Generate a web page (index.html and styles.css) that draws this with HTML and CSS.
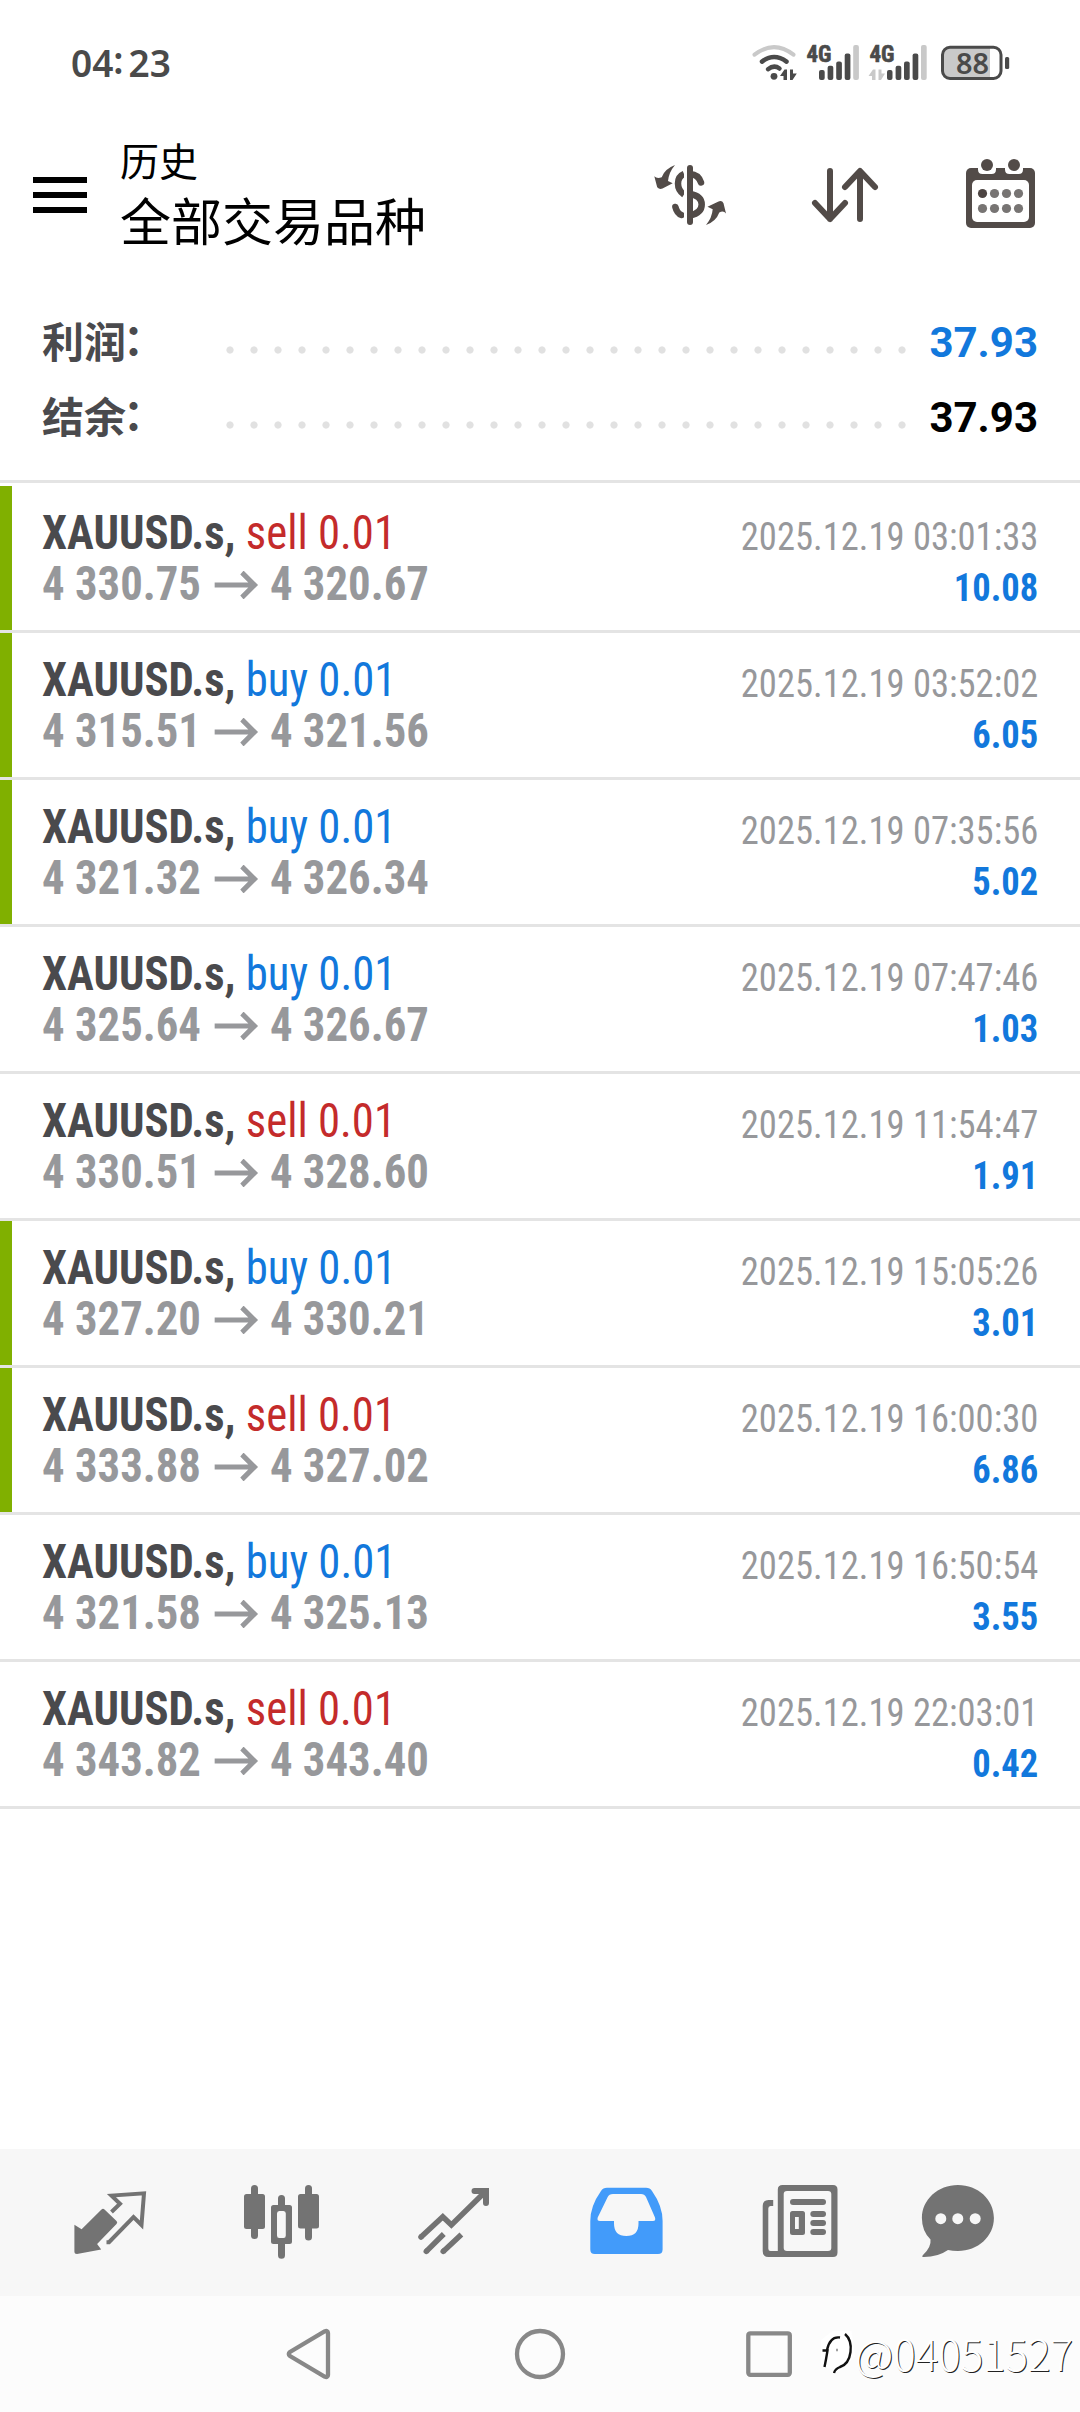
FILE: index.html
```html
<!DOCTYPE html>
<html lang="zh-CN">
<head>
<meta charset="utf-8">
<title>历史</title>
<link rel="stylesheet" href="styles.css">
</head>
<body>
<div class="screen">
  <div class="status">
    <span class="clock">04<span class="colon">:</span>23</span>
    <svg class="status-icons" width="264" height="46" viewBox="0 0 264 46">
      <g fill="none" stroke-linecap="round">
        <path d="M4.5 14.7Q24 -.5 43.5 14.7" stroke="#c9c9c9" stroke-width="4"/>
        <path d="M12 21.6Q24 12.500 36.500 21.600" stroke="#4a4a4a" stroke-width="4.500"/>
        <path d="M18 29.200Q24 24.500 29.500 28.500" stroke="#4a4a4a" stroke-width="4.500"/>
      </g>
      <g fill="#4a4a4a">
        <circle cx="24" cy="36.300" r="3.400"/>
        <path d="M30 36L34.500 29.500H37V40H33.500V36ZM40 29.500H43V33.500H46.800L42.500 40H40Z"/>
        <text class="net" x="56.500" y="22.300" textLength="25" lengthAdjust="spacingAndGlyphs">4G</text>
        <rect x="69" y="30" width="5.700" height="10" rx="2"/><rect x="77.600" y="25.700" width="5.700" height="14.300" rx="2"/><rect x="86.200" y="21.600" width="5.700" height="18.400" rx="2"/><rect x="94.700" y="13.600" width="5.700" height="26.400" rx="2"/>
        <text class="net" x="119.500" y="22.300" textLength="25" lengthAdjust="spacingAndGlyphs">4G</text>
        <rect x="137" y="30" width="5.500" height="10" rx="2"/><rect x="145.600" y="25.700" width="5.700" height="14.300" rx="2"/><rect x="154" y="21.600" width="5.700" height="18.400" rx="2"/><rect x="162.600" y="13.600" width="5.700" height="26.400" rx="2"/>
        <rect x="255" y="17" width="4.200" height="12" rx="1.500"/>
      </g>
      <g fill="#c9c9c9">
        <rect x="103.200" y="5" width="5.700" height="35" rx="2"/><rect x="171" y="5" width="5.700" height="35" rx="2"/>
        <path d="M118.500 36L123 29.500H125.500V40H122V36ZM128.500 29.500H131.500V33.500H135L131 40H128.500Z"/>
        <path d="M200 8H240V38H200Q193 38 193 31V15Q193 8 200 8Z"/>
      </g>
      <rect x="192.500" y="7.300" width="58.500" height="31.200" rx="7.500" fill="none" stroke="#4a4a4a" stroke-width="3"/>
      <text class="battery" x="206" y="33.700" textLength="33" lengthAdjust="spacingAndGlyphs">88</text>
    </svg>
  </div>

  <header class="header">
    <svg class="menu" width="54" height="36" viewBox="0 0 54 36"><path d="M0 0H54V6H0ZM0 15H54V21H0ZM0 30H54V36H0Z"/></svg>
    <div class="titles">
      <div class="title-small">历史</div>
      <div class="title-large">全部交易品种</div>
    </div>
    <div class="actions">
      <svg width="80" height="80" viewBox="0 0 80 80">
        <path fill="none" stroke="#524b48" stroke-width="6.500" d="M34 19Q28 21.500 28 28.500T34 39.500M40 39Q51.700 41 51.700 49.500T40 60.500"/>
        <path fill="none" stroke="#524b48" stroke-width="6.500" stroke-linecap="round" d="M40 19Q48.500 19.500 51 27.500M25.400 52Q27 58.500 31.500 60"/>
        <path fill="none" stroke="#fff" stroke-width="3" d="M35.500 10V70"/>
        <path fill="none" stroke="#524b48" stroke-width="6" stroke-linecap="round" d="M40 13V67"/>
        <path fill="#524b48" d="M25 10Q14.500 14 11.700 22.300Q7 24 4.300 21.300L7.200 32.300Q9.500 35 12.500 33.600L22.700 28.200L18 26Q19 17 25 10ZM56 70Q62 63 62.700 54.300L57.500 51.700L68 46.700Q72 45 73.500 48.200L76 58.500Q73.500 55 69.300 57.500Q66 66.500 56 70Z"/>
      </svg>
      <svg width="80" height="80" viewBox="0 0 80 80" fill="none" stroke="#524b48" stroke-width="6" stroke-linecap="round" stroke-linejoin="round">
        <path d="M25 16V64M10 48L25 64L40 48M55 64V16.500M40 32L55 16L70 32"/>
      </svg>
      <svg width="80" height="80" viewBox="0 0 80 80">
        <rect x="6" y="13" width="69" height="60" rx="5" fill="#524b48"/>
        <rect x="12" y="25" width="57" height="42" rx="5" fill="#fff"/>
        <path d="M18 12H36V14.500Q36 19 31.500 19H22.500Q18 19 18 14.500ZM45 12H63V14.500Q63 19 58.500 19H49.500Q45 19 45 14.500Z" fill="#fff"/>
        <g fill="#524b48"><circle cx="27" cy="10" r="6"/><circle cx="54" cy="10" r="6"/></g>
        <g fill="#777473"><circle cx="22.500" cy="38.500" r="4.600" fill="#4d4543"/><circle cx="34.500" cy="38.500" r="4.600"/><circle cx="46.500" cy="38.500" r="4.600"/><circle cx="58.500" cy="38.500" r="4.600"/><circle cx="22.500" cy="53.500" r="4.600"/><circle cx="34.500" cy="53.500" r="4.600"/><circle cx="46.500" cy="53.500" r="4.600"/><circle cx="58.500" cy="53.500" r="4.600"/></g>
      </svg>
    </div>
  </header>

  <section class="summary">
    <div class="sum-row"><span class="sum-label">利润<span class="label-colon">：</span></span><span class="leader"></span><span class="sum-value blue">37.93</span></div>
    <div class="sum-row"><span class="sum-label">结余<span class="label-colon">：</span></span><span class="leader"></span><span class="sum-value">37.93</span></div>
  </section>

  <main class="deals">
    <div class="deal mark"><div class="left"><div class="symbol">XAUUSD.s, <span class="sell">sell 0.01</span></div><div class="prices">4 330.75<svg class="arrow" viewBox="0 0 47 28"><path d="M0 14H43M29.500 1.500L43 14L29.500 26.500"/></svg>4 320.67</div></div><div class="right"><div class="date">2025.12.19 03:01:33</div><div class="profit">10.08</div></div></div>
    <div class="deal mark"><div class="left"><div class="symbol">XAUUSD.s, <span class="buy">buy 0.01</span></div><div class="prices">4 315.51<svg class="arrow" viewBox="0 0 47 28"><path d="M0 14H43M29.500 1.500L43 14L29.500 26.500"/></svg>4 321.56</div></div><div class="right"><div class="date">2025.12.19 03:52:02</div><div class="profit">6.05</div></div></div>
    <div class="deal mark"><div class="left"><div class="symbol">XAUUSD.s, <span class="buy">buy 0.01</span></div><div class="prices">4 321.32<svg class="arrow" viewBox="0 0 47 28"><path d="M0 14H43M29.500 1.500L43 14L29.500 26.500"/></svg>4 326.34</div></div><div class="right"><div class="date">2025.12.19 07:35:56</div><div class="profit">5.02</div></div></div>
    <div class="deal"><div class="left"><div class="symbol">XAUUSD.s, <span class="buy">buy 0.01</span></div><div class="prices">4 325.64<svg class="arrow" viewBox="0 0 47 28"><path d="M0 14H43M29.500 1.500L43 14L29.500 26.500"/></svg>4 326.67</div></div><div class="right"><div class="date">2025.12.19 07:47:46</div><div class="profit">1.03</div></div></div>
    <div class="deal"><div class="left"><div class="symbol">XAUUSD.s, <span class="sell">sell 0.01</span></div><div class="prices">4 330.51<svg class="arrow" viewBox="0 0 47 28"><path d="M0 14H43M29.500 1.500L43 14L29.500 26.500"/></svg>4 328.60</div></div><div class="right"><div class="date">2025.12.19 11:54:47</div><div class="profit">1.91</div></div></div>
    <div class="deal mark"><div class="left"><div class="symbol">XAUUSD.s, <span class="buy">buy 0.01</span></div><div class="prices">4 327.20<svg class="arrow" viewBox="0 0 47 28"><path d="M0 14H43M29.500 1.500L43 14L29.500 26.500"/></svg>4 330.21</div></div><div class="right"><div class="date">2025.12.19 15:05:26</div><div class="profit">3.01</div></div></div>
    <div class="deal mark"><div class="left"><div class="symbol">XAUUSD.s, <span class="sell">sell 0.01</span></div><div class="prices">4 333.88<svg class="arrow" viewBox="0 0 47 28"><path d="M0 14H43M29.500 1.500L43 14L29.500 26.500"/></svg>4 327.02</div></div><div class="right"><div class="date">2025.12.19 16:00:30</div><div class="profit">6.86</div></div></div>
    <div class="deal"><div class="left"><div class="symbol">XAUUSD.s, <span class="buy">buy 0.01</span></div><div class="prices">4 321.58<svg class="arrow" viewBox="0 0 47 28"><path d="M0 14H43M29.500 1.500L43 14L29.500 26.500"/></svg>4 325.13</div></div><div class="right"><div class="date">2025.12.19 16:50:54</div><div class="profit">3.55</div></div></div>
    <div class="deal"><div class="left"><div class="symbol">XAUUSD.s, <span class="sell">sell 0.01</span></div><div class="prices">4 343.82<svg class="arrow" viewBox="0 0 47 28"><path d="M0 14H43M29.500 1.500L43 14L29.500 26.500"/></svg>4 343.40</div></div><div class="right"><div class="date">2025.12.19 22:03:01</div><div class="profit">0.42</div></div></div>
  </main>

  <nav class="tabs">
    <svg width="84" height="84" viewBox="0 0 84 84">
      <path fill="#737373" d="M6.400 44.700L13.600 49.300L33.500 29.500Q35 28 36.500 29.500L48.500 41Q50 42.500 48.500 44L29.100 64L33.200 69.500L9 74Q6.400 74 6.400 71.500Z"/>
      <path fill="none" stroke="#737373" stroke-width="4" d="M43.500 32L52 23.800L43.500 15.600L76 13.300L73.500 45L65.500 37L41 62.200H38.500" />
    </svg>
    <svg width="84" height="84" viewBox="0 0 84 84" fill="#737373">
      <rect x="5" y="14" width="21" height="35" rx="2.500"/><rect x="12" y="5" width="7" height="54" rx="3.500"/>
      <path fill-rule="evenodd" d="M34.500 25H50.500Q53 25 53 27.500V61.500Q53 64 50.500 64H34.500Q32 64 32 61.500V27.500Q32 25 34.500 25ZM40.300 31Q38 31 38 33.500V55.500Q38 58 40.300 58H44.500Q46.800 58 46.800 55.500V33.500Q46.800 31 44.500 31Z"/>
      <path d="M39 26V18.500Q39 15 42.500 15T46 18.500V26ZM39 63V75.300Q39 78.800 42.500 78.800T46 75.300V63Z"/>
      <rect x="59" y="14" width="21" height="34.500" rx="2.500"/><rect x="66" y="5" width="7" height="55.500" rx="3.500"/>
    </svg>
    <svg width="84" height="84" viewBox="0 0 84 84" fill="none" stroke="#737373" stroke-width="5.500">
      <path stroke-linecap="round" d="M9 57L9.200 56.800"/><path d="M9 57L30.800 36.700L39.400 45L74 11"/>
      <path stroke-width="6" stroke-linecap="round" d="M62.500 11H74V23"/>
      <path stroke-linecap="round" d="M14.300 71.400L14.500 71.200M31.200 71.400L31.400 71.200"/><path d="M14.300 71.400L31.800 54M31.200 71.400L49.400 54.500"/>
    </svg>
    <svg width="84" height="84" viewBox="0 0 84 84">
      <path fill="#429bfa" fill-rule="evenodd" d="M23 7.700H62Q66 7.700 68 11Q78.600 26 78.600 41V69.500Q78.600 74 74 74H10.800Q6.300 74 6.300 69.500V41Q6.300 26 17 11Q19 7.700 23 7.700ZM29 14Q25 14 23.700 17L13.700 37.500Q12.700 41 16 41H30V43.500Q30 56 42.300 56T54.500 43.500V41H69Q72 41 71 37.500L62 17Q60.500 14 57 14Z"/>
    </svg>
    <svg width="84" height="84" viewBox="0 0 84 84" fill="#737373">
      <path fill-rule="evenodd" d="M24.500 5H75Q79.500 5 79.500 9.500V72.500Q79.500 77 75 77H10.500Q4.700 77 4.700 71V26Q4.700 20 10.500 20H15.200V26H12.500Q10.300 26 10.300 28.500V68.500Q10.300 71 12.500 71H19.800V9.500Q19.800 5 24.500 5ZM29 11Q25.700 11 25.700 14V68Q25.700 71 29 71H70Q73.300 71 73.300 68V14Q73.300 11 70 11Z"/>
      <rect x="32" y="19" width="36" height="6" rx="3"/>
      <path fill-rule="evenodd" d="M34.500 31H44.500Q47 31 47 33.500V52.500Q47 55 44.500 55H34.500Q32 55 32 52.500V33.500Q32 31 34.500 31ZM37 37V49H40.800V37Z"/>
      <rect x="52.300" y="31" width="15.700" height="6" rx="3"/><rect x="52.300" y="40" width="15.700" height="6" rx="3"/><rect x="52.300" y="49" width="15.700" height="6" rx="3"/>
    </svg>
    <svg width="84" height="84" viewBox="0 0 84 84">
      <path fill="#737373" d="M41.900 5C62 5 77.900 19.500 77.900 38C77.900 56.500 62 71 41.900 71Q36.500 71 32 70Q22 77 8 77Q5 77 7 75Q15.500 67 14.500 59.500Q5.900 51 5.900 38C5.900 19.500 22 5 41.900 5Z"/>
      <g fill="#f7f7f7"><circle cx="24.800" cy="38.700" r="5.500"/><circle cx="41.800" cy="38.700" r="5.500"/><circle cx="59.200" cy="38.700" r="5.500"/></g>
    </svg>
  </nav>

  <footer class="system-nav">
    <svg width="54" height="54" viewBox="0 0 54 54"><path d="M39.500 4.500Q43 3 43 6V48Q43 51 39.500 49.500L5 29Q2.500 27 5 25Z"/></svg>
    <svg width="54" height="54" viewBox="0 0 54 54"><circle cx="27" cy="27" r="23"/></svg>
    <svg width="54" height="54" viewBox="0 0 54 54"><rect x="7.300" y="6.300" width="41.500" height="41.500" rx="2"/></svg>
    <div class="watermark">
      <svg width="36" height="46" viewBox="0 0 36 46">
        <path stroke="#fff" stroke-width="8" d="M5 12L14 5H28L31 25L18 37L5 33Z" fill="#fff"/>
        <path class="ink" d="M2.500 20.500H7.500Q6 30 4.500 37M7 20Q10 6 20 7.500M25 4Q32 10 30.500 22T20 37Q15 39 14 43"/><path class="ink" stroke-opacity=".4" d="M16 20H18"/>
      </svg>
      <span>@04051527</span>
    </div>
  </footer>
</div>
</body>
</html>
```
FILE: styles.css
```css
* { box-sizing: border-box; }
body { margin: 0; background: #fff; }
svg { display: block; flex: none; }

.screen {
  width: 1080px;
  height: 2412px;
  display: flex;
  flex-direction: column;
  overflow: hidden;
  background: #fff;
  color: #000;
  font-family: "Roboto", "Noto Sans CJK SC", sans-serif;
}

/* Status bar */
.status {
  height: 130px;
  padding: 40px 66px 0 71px;
  display: flex;
  justify-content: space-between;
  align-items: flex-start;
}
.clock {
  margin-top: -1px;
  font: 600 37px/48px "Noto Sans", sans-serif;
  color: #4a4a4a;
}
.colon { margin-right: 5px; position: relative; top: -3px; }
.net { font: 700 24px "Roboto Condensed", "Roboto", sans-serif; stroke: #4a4a4a; stroke-width: .6; }
.battery { font: 600 28px "Noto Sans", sans-serif; fill: #4a4a4a; }

/* Header */
.header {
  height: 130px;
  padding: 0 40px 0 33px;
  display: flex;
  align-items: center;
}
.titles {
  margin-left: 33px;
  padding-bottom: 6px;
  font-family: "Noto Sans CJK SC", sans-serif;
}
.title-small { font-size: 39px; line-height: 54px; }
.title-large { font-size: 51px; line-height: 66px; }
.actions { margin-left: auto; display: flex; gap: 75px; }

/* Totals */
.summary {
  height: 223px;
  padding: 42px 44px 0 42px;
  border-bottom: 3px solid #e4e4e4;
}
.sum-row { display: flex; align-items: center; height: 75px; }
.sum-label {
  width: 176px;
  font: 700 42px/75px "Noto Sans CJK SC", sans-serif;
  color: #4a4a4d;
}
.label-colon { position: relative; left: -3px; top: -3px; }
.leader {
  width: 696px;
  height: 24px;
  margin-top: 21px;
  background: radial-gradient(circle, #e1e1e1 3.2px, transparent 4px) 0 0 / 24px 24px;
}
.sum-value {
  margin-left: auto;
  margin-right: -2px;
  padding-top: 6px;
  font: 700 42px/69px "Roboto", sans-serif;
}
.blue, .buy, .profit { color: #1278dc; }

/* Deals */
.deals { flex: 1; padding-top: 3px; }
.deal {
  height: 147px;
  padding: 21px 42px;
  display: flex;
  justify-content: space-between;
  border-bottom: 3px solid #e4e4e4;
  font-family: "Roboto Condensed", "Roboto", sans-serif;
  line-height: 51px;
  white-space: nowrap;
}
.mark { background: linear-gradient(#80b000, #80b000) 0 0 / 12px 100% no-repeat padding-box; }
.left {
  font-size: 48px;
  font-weight: 700;
  transform: scaleX(.932);
  transform-origin: 0 0;
}
.symbol { color: #4a4a4d; }
.symbol span { font-weight: 400; }
.symbol .sell { color: #c42b2b; }
.prices { display: flex; align-items: center; color: #97989b; }
.arrow {
  width: 47px;
  height: 28px;
  margin: 2px 13px 0 14px;
  fill: none;
  stroke: #97989b;
  stroke-width: 5.2;
}
.right {
  padding-top: 4px;
  font-size: 39.5px;
  text-align: right;
  transform: scaleX(.926);
  transform-origin: 100% 0;
}
.date { color: #97989b; }
.profit { font-weight: 700; }

/* Tab bar */
.tabs {
  height: 147px;
  padding: 31px 0 0 68px;
  display: grid;
  grid-template-columns: 171px 173px 172px 174px 158px 84px;
  background: #f7f7f7;
}

/* System navigation */
.system-nav {
  position: relative;
  height: 116px;
  padding: 31px 285px 0;
  display: flex;
  justify-content: space-between;
  background: #fcfcfc;
}
.system-nav > svg { fill: none; stroke: #888; stroke-width: 4.3; }
.watermark {
  position: absolute;
  left: 820px;
  top: 34px;
  display: flex;
  align-items: center;
  font: 300 42px/46px "Noto Sans CJK SC", sans-serif;
  color: #fff;
  text-shadow: 1px 1px 0 #222;
}
.watermark svg { margin-right: -1px; }
.ink { fill: none; stroke: #111; stroke-width: 2.4; }
```
